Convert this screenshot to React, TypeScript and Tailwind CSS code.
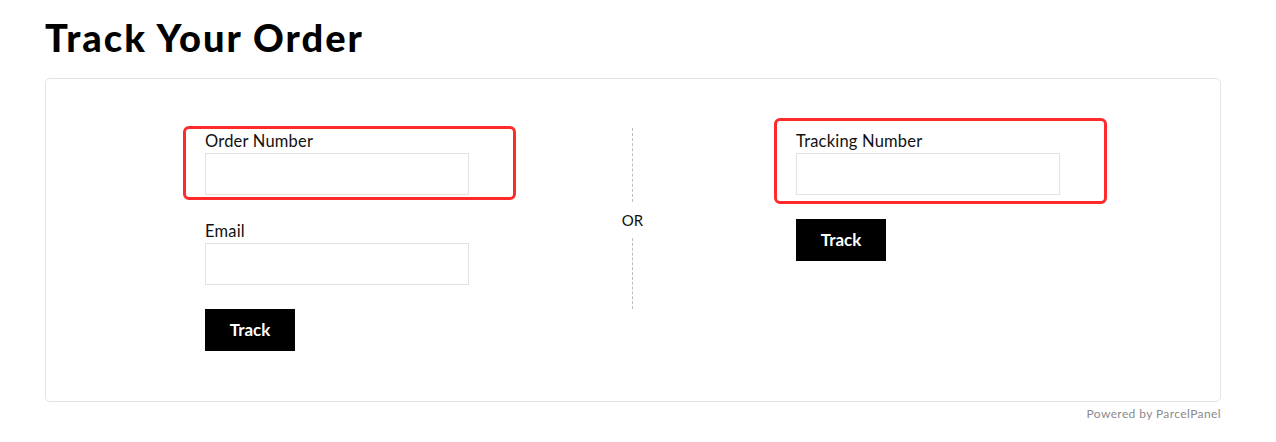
import React from 'react';

const font = { fontFamily: '"Lato", "Noto Sans", sans-serif' };

const Field: React.FC<{ label: string; mark?: string }> = ({ label, mark }) => (
  <div className="relative w-[264px]">
    {mark && <div className={`absolute border-[3px] border-[#ff2a2a] rounded-[6px] pointer-events-none ${mark}`} />}
    <label className="block text-[16.5px] leading-[20px] text-[#111] mb-[2px] tracking-[0.2px]">{label}</label>
    <input type="text" className="block w-[264px] h-[42px] border border-[#e4e2dc] outline-none px-3" />
  </div>
);

const TrackButton: React.FC = () => (
  <button className="w-[90px] h-[42px] bg-black text-white text-[17px] font-bold">Track</button>
);

export default function App() {
  return (
    <div className="bg-white w-[1276px] min-h-[442px] pl-[45px] pt-[12px]" style={font}>
      <h1 className="text-[38px] leading-[50px] font-black text-black tracking-[2px]">Track Your Order</h1>
      <div className="mt-[16px] w-[1176px] h-[324px] border border-[#e3e3e3] rounded-[5px] flex pt-[52px]">
        <div className="w-[586px] pl-[159px]">
          <div className="flex flex-col w-[264px]">
            <Field label="Order Number" mark="-left-[22px] -top-[5px] w-[333px] h-[74px]" />
            <div className="mt-[26px]">
              <Field label="Email" />
            </div>
            <div className="mt-[24px]">
              <TrackButton />
            </div>
          </div>
        </div>
        <div className="flex flex-col items-center -mt-[3px] w-[1px]">
          <div className="h-[74px] border-l border-dashed border-[#bdbdbd]" />
          <div className="py-[8px] text-[15px] leading-[20px] text-[#111]">OR</div>
          <div className="h-[71px] border-l border-dashed border-[#bdbdbd]" />
        </div>
        <div className="flex-1 pl-[163px]">
          <div className="flex flex-col w-[264px]">
            <Field label="Tracking Number" mark="-left-[22px] -top-[13px] w-[333px] h-[86px]" />
            <div className="mt-[24px]">
              <TrackButton />
            </div>
          </div>
        </div>
      </div>
      <div className="w-[1176px] text-right text-[12px] leading-[16px] text-[#8a8a8a] mt-[4px] tracking-[0.4px]">Powered by ParcelPanel</div>
    </div>
  );
}
